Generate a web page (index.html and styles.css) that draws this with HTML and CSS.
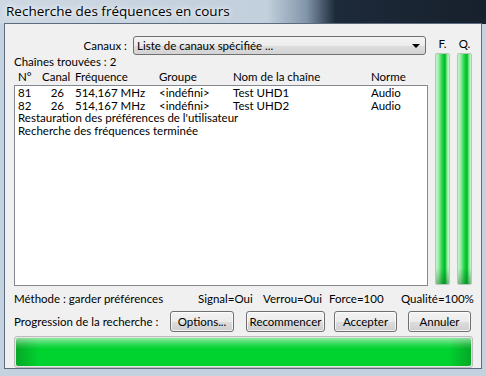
FILE: index.html
```html
<!DOCTYPE html>
<html lang="fr">
<head>
  <meta charset="UTF-8" />
  <title>Recherche des fréquences en cours</title>
  <link rel="stylesheet" href="styles.css">
</head>
<body>
  <div class="window">
    <div class="titlebar">Recherche des fréquences en cours</div>
    <div class="client">
      <div class="top">
        <div class="scan">
          <div class="canaux">
            <span class="canaux-label">Canaux :</span>
            <div class="combo">
              <span>Liste de canaux spécifiée ...</span>
              <span class="combo-arrow"></span>
            </div>
          </div>
          <div class="found">Chaînes trouvées : 2</div>
          <div class="cols">
            <span class="c-num">N°</span>
            <span class="c-canal">Canal</span>
            <span class="c-freq">Fréquence</span>
            <span class="c-group">Groupe</span>
            <span class="c-name">Nom de la chaîne</span>
            <span class="c-norm">Norme</span>
          </div>
          <div class="list">
            <div class="row">
              <span class="c-num">81</span>
              <span class="c-canal num">26</span>
              <span class="c-freq">514,167 MHz</span>
              <span class="c-group">&lt;indéfini&gt;</span>
              <span class="c-name">Test UHD1</span>
              <span class="c-norm">Audio</span>
            </div>
            <div class="row">
              <span class="c-num">82</span>
              <span class="c-canal num">26</span>
              <span class="c-freq">514,167 MHz</span>
              <span class="c-group">&lt;indéfini&gt;</span>
              <span class="c-name">Test UHD2</span>
              <span class="c-norm">Audio</span>
            </div>
            <div class="row">Restauration des préférences de l'utilisateur</div>
            <div class="row">Recherche des fréquences terminée</div>
          </div>
        </div>
        <div class="meters">
          <div class="meter">
            <span class="meter-label">F.</span>
            <div class="bar"></div>
          </div>
          <div class="meter">
            <span class="meter-label">Q.</span>
            <div class="bar"></div>
          </div>
        </div>
      </div>

      <div class="status">
        <span class="method">Méthode : garder préférences</span>
        <span class="s-signal">Signal=Oui</span>
        <span class="s-lock">Verrou=Oui</span>
        <span class="s-force">Force=100</span>
        <span class="s-quality">Qualité=100%</span>
      </div>

      <div class="actions">
        <span class="progress-label">Progression de la recherche :</span>
        <button class="btn btn-options">Options...</button>
        <button class="btn btn-restart">Recommencer</button>
        <button class="btn btn-accept">Accepter</button>
        <button class="btn btn-cancel">Annuler</button>
      </div>

      <div class="progress"><div class="progress-fill"></div></div>
    </div>
  </div>
</body>
</html>
```

FILE: styles.css
```css
body {
  margin: 0;
  width: 486px;
  height: 376px;
  overflow: hidden;
  font-family: Lato, 'Open Sans', sans-serif;
  font-size: 11.5px;
  color: #000;
  background: linear-gradient(90deg, #cdd8e3 0%, #c2cfdc 55%, #8296aa 63%, #1d2a3a 69%, #17202c 100%);
}
.window {
  height: 376px;
  display: flex;
  flex-direction: column;
  background: linear-gradient(180deg, rgba(255,255,255,0) 0px, rgba(255,255,255,0) 24px, #c4d1de 24px);
}
.titlebar {
  height: 24px;
  line-height: 22px;
  padding-left: 6px;
  font-family: 'Open Sans', sans-serif;
  font-size: 13.5px;
  color: #000;
  text-shadow: 0 0 8px #fff, 0 0 4px #fff;
}
.client {
  margin: 0 4px 7px 4px;
  flex: 1;
  background: #f0f0f0;
  border: 1px solid #5b6c80;
  padding: 0 7px 0 9px;
  display: flex;
  flex-direction: column;
}
.top {
  display: flex;
  gap: 7px;
}
.scan {
  width: 414px;
  display: flex;
  flex-direction: column;
}
.canaux {
  margin-top: 12px;
  display: flex;
  justify-content: flex-end;
  align-items: center;
  gap: 6px;
  padding-right: 2px;
  height: 19px;
}
.combo {
  width: 283px;
  height: 17px;
  border: 1px solid #707070;
  border-radius: 3px;
  background: linear-gradient(180deg, #f4f4f4 0%, #ececec 50%, #dedede 51%, #d3d3d3 100%);
  display: flex;
  align-items: center;
  justify-content: space-between;
  padding: 0 5px 0 3px;
}
.combo-arrow {
  width: 0;
  height: 0;
  border-left: 4px solid transparent;
  border-right: 4px solid transparent;
  border-top: 4px solid #000;
}
.found {
  height: 14px;
  line-height: 14px;
}
.cols, .row {
  display: flex;
  height: 12.7px;
  line-height: 12.7px;
  white-space: nowrap;
}
.cols {
  margin-top: 1px;
  padding-left: 4px;
  height: 14px;
  line-height: 14px;
}
.c-num { width: 24px; }
.c-canal { width: 33px; }
.c-canal.num { width: 22px; text-align: right; margin-right: 11px; }
.c-freq { width: 84px; }
.c-group { width: 74px; }
.c-name { width: 138px; }
.c-norm { width: 50px; }
.list {
  margin-top: 1px;
  background: #fff;
  border: 1px solid #828790;
  padding: 1px 3px;
  box-sizing: border-box;
  height: 201px;
}
.meters {
  display: flex;
  gap: 7px;
  padding-top: 13px;
}
.meter {
  width: 15px;
  display: flex;
  flex-direction: column;
  align-items: center;
}
.meter-label {
  height: 14px;
  line-height: 14px;
  margin-bottom: 2px;
}
.bar {
  width: 15px;
  height: 232px;
  border-radius: 2px;
  background:
    linear-gradient(180deg, rgba(0,0,0,0) 0%, rgba(0,0,0,0) 93%, rgba(0,80,20,0.35) 100%),
    linear-gradient(90deg, #c5f5cb 0%, #9ceca8 20%, #3fdc5e 40%, #10cc33 55%, #00b82a 70%, #8de89c 85%, #c9f5cf 100%);
  border: 1px solid #b7c8b9;
  box-sizing: border-box;
}
.status {
  display: flex;
  height: 14px;
  line-height: 14px;
  margin-top: 6px;
  white-space: nowrap;
}
.method { width: 184px; }
.s-signal { width: 65px; }
.s-lock { width: 66px; }
.s-force { width: 72px; }
.actions {
  display: flex;
  align-items: center;
  margin-top: 5px;
  height: 21px;
}
.progress-label { width: 156px; }
.btn {
  font-family: inherit;
  font-size: 11.5px;
  height: 21px;
  padding: 0;
  border: 1px solid #707070;
  border-radius: 3px;
  background: linear-gradient(180deg, #f3f3f3 0%, #ebebeb 50%, #dddddd 51%, #cfcfcf 100%);
  color: #000;
  box-shadow: inset 0 0 0 1px rgba(255,255,255,0.7);
}
.btn-options { width: 64px; }
.btn-restart { width: 79px; margin-left: 12px; }
.btn-accept { width: 63px; margin-left: 9px; }
.btn-cancel { width: 63px; margin-left: 11px; }
.progress {
  margin-top: 4px;
  height: 28px;
  margin-right: 1px;
  border: 1px solid #bcbcbc;
  border-radius: 3px;
  background: #e6e6e6;
  padding: 1px;
}
.progress-fill {
  height: 100%;
  border-radius: 2px;
  background:
    linear-gradient(180deg, rgba(255,255,255,0.55) 0%, rgba(255,255,255,0.15) 25%, rgba(255,255,255,0) 40%),
    linear-gradient(90deg, #06a826 0%, #00d22f 5%, #00d22f 95%, #06a826 100%);
}
```
